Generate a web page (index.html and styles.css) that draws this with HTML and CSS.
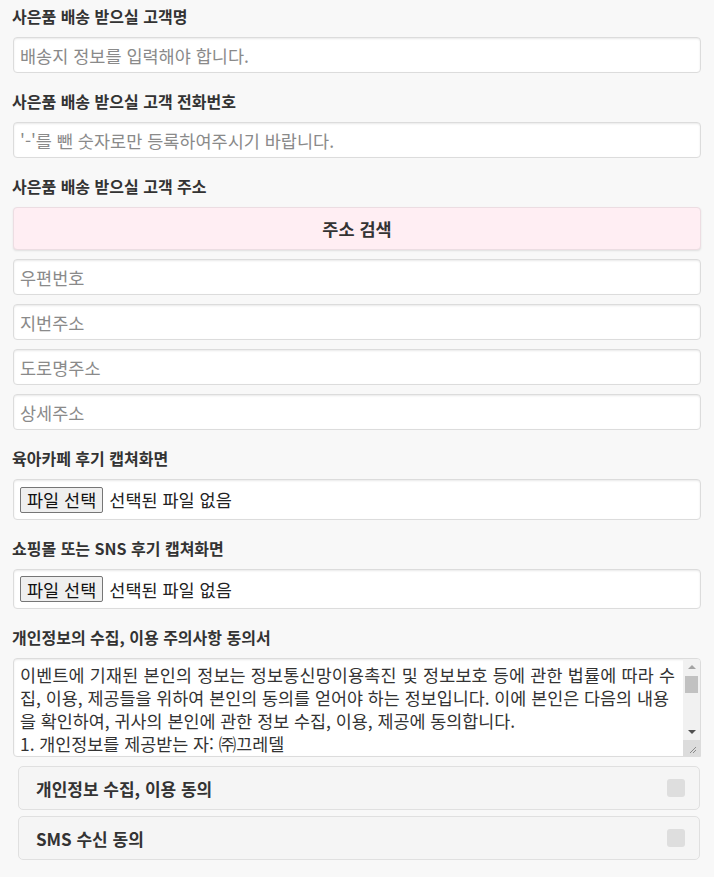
FILE: index.html
```html
<!DOCTYPE html>
<html lang="ko">
<head>
<meta charset="utf-8">
<title>사은품 배송 정보</title>
<link rel="stylesheet" href="styles.css">
</head>
<body>
<form class="form">
  <div class="group">
    <label class="label">사은품 배송 받으실 고객명</label>
    <div class="input"><span class="ph">배송지 정보를 입력해야 합니다.</span></div>
  </div>
  <div class="group">
    <label class="label">사은품 배송 받으실 고객 전화번호</label>
    <div class="input"><span class="ph">'-'를 뺀 숫자로만 등록하여주시기 바랍니다.</span></div>
  </div>
  <div class="group">
    <label class="label">사은품 배송 받으실 고객 주소</label>
    <div class="stack">
      <div class="search-btn">주소 검색</div>
      <div class="input"><span class="ph">우편번호</span></div>
      <div class="input"><span class="ph">지번주소</span></div>
      <div class="input"><span class="ph">도로명주소</span></div>
      <div class="input"><span class="ph">상세주소</span></div>
    </div>
  </div>
  <div class="group">
    <label class="label">육아카페 후기 캡쳐화면</label>
    <div class="file"><span class="file-btn">파일 선택</span><span class="file-name">선택된 파일 없음</span></div>
  </div>
  <div class="group">
    <label class="label">쇼핑몰 또는 SNS 후기 캡쳐화면</label>
    <div class="file"><span class="file-btn">파일 선택</span><span class="file-name">선택된 파일 없음</span></div>
  </div>
  <div class="group last">
    <label class="label">개인정보의 수집, 이용 주의사항 동의서</label>
    <div class="stack">
      <div class="textarea">
        <div class="ta-text">
          <div class="ta-line wide">이벤트에 기재된 본인의 정보는 정보통신망이용촉진 및 정보보호 등에 관한 법률에 따라 수</div>
          <div class="ta-line">집, 이용, 제공들을 위하여 본인의 동의를 얻어야 하는 정보입니다. 이에 본인은 다음의 내용</div>
          <div class="ta-line">을 확인하여, 귀사의 본인에 관한 정보 수집, 이용, 제공에 동의합니다.</div>
          <div class="ta-line">1. 개인정보를 제공받는 자: ㈜끄레델</div>
        </div>
        <div class="scrollbar">
          <div class="sb-up"></div>
          <div class="sb-track"><div class="sb-thumb"></div></div>
          <div class="sb-down"></div>
          <div class="sb-corner">
            <svg width="16" height="16" viewBox="0 0 16 16"><path d="M13 7 L7 13 M13 10 L10 13" stroke="#8a8a8a" stroke-width="1" fill="none"/></svg>
          </div>
        </div>
      </div>
      <div class="agree-list">
        <div class="agree"><span>개인정보 수집, 이용 동의</span><span class="check"></span></div>
        <div class="agree"><span>SMS 수신 동의</span><span class="check"></span></div>
      </div>
    </div>
  </div>
</form>
</body>
</html>
```

FILE: styles.css
```css
html, body {
  margin: 0;
  padding: 0;
  background: #f8f8f8;
}
body {
  font-family: "Noto Sans CJK KR", "Noto Sans", sans-serif;
  color: #333;
}
.form {
  padding: 6px 13px 0 13px;
  display: flex;
  flex-direction: column;
  gap: 18px;
}
.group {
  display: flex;
  flex-direction: column;
  gap: 10px;
}
.label {
  font-size: 16px;
  line-height: 21px;
  font-weight: 700;
  color: #333;
  margin-left: -1px;
}
.stack {
  display: flex;
  flex-direction: column;
  gap: 9px;
}
.input {
  height: 36px;
  box-sizing: border-box;
  border: 1px solid #dcdcdc;
  border-radius: 4px;
  background: #fff;
  box-shadow: inset 0 1px 2px rgba(0,0,0,0.09);
  display: flex;
  align-items: center;
  padding: 0 6px;
  font-size: 17.5px;
}
.ph {
  color: #8a8a8a;
}
.search-btn {
  height: 43px;
  box-sizing: border-box;
  border: 1px solid #ecdde2;
  border-radius: 4px;
  background: #ffeef3;
  box-shadow: 0 1px 2px rgba(0,0,0,0.1);
  display: flex;
  align-items: center;
  justify-content: center;
  font-size: 17.5px;
  font-weight: 600;
  color: #333;
}
.file {
  height: 41px;
  box-sizing: border-box;
  border: 1px solid #dcdcdc;
  border-radius: 4px;
  background: #fff;
  box-shadow: inset 0 1px 2px rgba(0,0,0,0.09);
  display: flex;
  align-items: center;
  padding: 0 6px;
  gap: 6px;
  font-size: 17.5px;
}
.group:nth-child(5) .file {
  height: 40px;
}
.file-btn {
  height: 26px;
  box-sizing: border-box;
  border: 1px solid #767676;
  border-radius: 2px;
  background: #efefef;
  padding: 0 6px;
  display: flex;
  align-items: center;
  color: #111;
}
.file-name {
  color: #222;
}
.textarea {
  height: 99px;
  box-sizing: border-box;
  border: 1px solid #dcdcdc;
  border-radius: 4px 4px 0 4px;
  background: #fff;
  box-shadow: inset 0 1px 2px rgba(0,0,0,0.09);
  display: flex;
  overflow: hidden;
}
.ta-text {
  flex: 1;
  min-width: 0;
  padding: 4px 0 0 6px;
  font-size: 17.4px;
  line-height: 23px;
  color: #333;
  overflow: hidden;
}
.ta-line {
  white-space: nowrap;
  height: 23px;
}
.ta-line.wide {
  letter-spacing: 0.2px;
}
.scrollbar {
  width: 17px;
  flex: none;
  background: #f1f1f1;
  display: flex;
  flex-direction: column;
}
.sb-up, .sb-down {
  height: 16px;
  display: flex;
  align-items: center;
  justify-content: center;
}
.sb-up::after {
  content: "";
  border-left: 4px solid transparent;
  border-right: 4px solid transparent;
  border-bottom: 4px solid #a3a3a3;
}
.sb-down::after {
  content: "";
  border-left: 4px solid transparent;
  border-right: 4px solid transparent;
  border-top: 4px solid #505050;
}
.sb-track {
  flex: 1;
  padding: 1px 2px;
}
.sb-thumb {
  height: 17px;
  background: #c1c1c1;
}
.sb-corner {
  height: 16px;
  background: #dcdcdc;
}
.sb-corner svg {
  display: block;
}
.agree-list {
  display: flex;
  flex-direction: column;
  gap: 6px;
  margin: 0 1px 0 5px;
}
.agree {
  height: 44px;
  box-sizing: border-box;
  border: 1px solid #e0e0e0;
  border-radius: 5px;
  background: #f5f5f5;
  display: flex;
  align-items: center;
  justify-content: space-between;
  padding: 0 14px 0 17px;
  font-size: 17px;
  font-weight: 700;
  color: #333;
}
.check {
  width: 18px;
  height: 18px;
  border-radius: 3px;
  background: #dedede;
}
```
